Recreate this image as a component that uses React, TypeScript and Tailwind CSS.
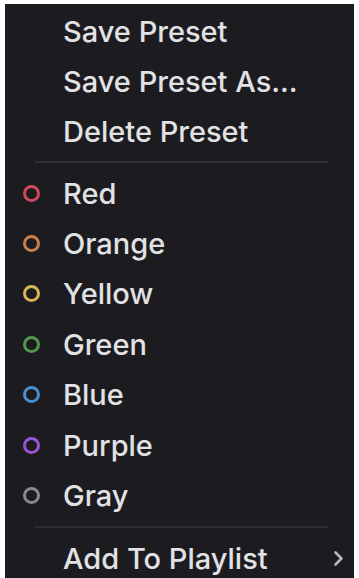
import React from 'react';

const colors = [
  { name: 'Red', color: '#d1495b' },
  { name: 'Orange', color: '#c8804a' },
  { name: 'Yellow', color: '#d9b45a' },
  { name: 'Green', color: '#4f9a4a' },
  { name: 'Blue', color: '#4a8fd0' },
  { name: 'Purple', color: '#9a55d6' },
  { name: 'Gray', color: '#8a8a8a' },
];

function Row({ children, dot, h = 'h-[50px]' }: { children: React.ReactNode; dot?: string; h?: string }) {
  return (
    <div className={`flex items-center shrink-0 ${h}`}>
      <div className="w-[58px] flex items-center pl-[18px]">
        {dot && (
          <span
            className="block w-[17px] h-[17px] rounded-full border-[3px]"
            style={{ borderColor: dot }}
          />
        )}
      </div>
      <span className="text-[29px] font-medium text-[#e2e2e4] leading-none">{children}</span>
    </div>
  );
}

function Separator() {
  return (
    <div className="h-[12px] shrink-0 flex items-center pl-[30px] pr-[26px]">
      <div className="h-[2px] w-full bg-[#2e2e33]" />
    </div>
  );
}

export default function App() {
  return (
    <div className="w-[359px] h-[578px] bg-white pl-[5px] pr-[5px] pt-[4px]">
      <div
        className="h-full bg-[#1c1c20] flex flex-col pt-[2px] overflow-hidden"
        style={{ fontFamily: 'Inter, "Noto Sans", sans-serif' }}
      >
        <Row>Save Preset</Row>
        <Row>Save Preset As...</Row>
        <Row>Delete Preset</Row>
        <Separator />
        {colors.map((c) => (
          <Row key={c.name} dot={c.color} h="h-[50.4px]">
            {c.name}
          </Row>
        ))}
        <Separator />
        <div className="flex items-center h-[50px] shrink-0 pr-[9px] pt-[1px]">
          <div className="w-[58px]" />
          <span className="text-[29px] font-medium text-[#e2e2e4] leading-none flex-1">Add To Playlist</span>
          <svg width="13" height="19" viewBox="0 0 13 19" fill="none">
            <path d="M3.5 3.5l6 6-6 6" stroke="#b8b8bc" strokeWidth="2.6" strokeLinecap="round" strokeLinejoin="round" />
          </svg>
        </div>
      </div>
    </div>
  );
}
